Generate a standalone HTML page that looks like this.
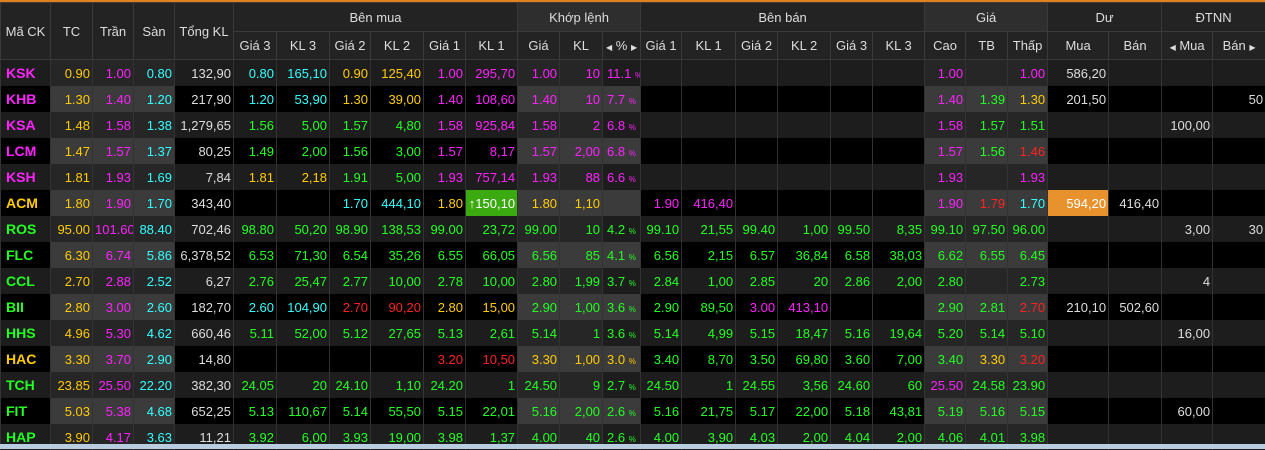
<!DOCTYPE html>
<html><head><meta charset="utf-8"><style>
body{margin:0;background:#000;width:1265px;height:449px;overflow:hidden;font-family:"Liberation Sans",sans-serif;font-size:13px}
.top{height:2px;background:#e0801e}
table{border-collapse:collapse;table-layout:fixed;width:1265px}
td,th{padding:0 2px;white-space:nowrap;overflow:hidden;text-align:right;border-left:1px solid #333;border-right:1px solid #333}
th{background:#232323;color:#ddd;font-weight:normal;text-align:center;border:1px solid #3a3a3a}
th.k{background:#2e2e2e}
tr.h1 th{height:28px}
tr.h2 th{height:27px}
tr.a td{background:#1d1d1d;height:26px}
tr.b td{background:#000;height:26px}
tr.a td.h{background:#262626}
tr.b td.h{background:#3b3b3b}
td.t{text-align:left;font-weight:bold;font-size:14px;padding-left:5px}
.c{color:#3ff}.y{color:#fc0}.m{color:#f2f}.g{color:#2f2}.r{color:#f22}.w{color:#ddd}
td.p{text-align:left;padding-left:4px}
small{font-size:8px}
td.gb{background:#3aaa10 !important;color:#fff}
td.ob{background:#e8922e !important;color:#fff}
.bar{position:absolute;left:0;top:444px;width:1265px;height:5px;background:#b8cde0}
</style></head><body>
<div class="top"></div>
<table>
<colgroup><col style="width:50px"><col style="width:42px"><col style="width:41px"><col style="width:41px"><col style="width:59px"><col style="width:43px"><col style="width:53px"><col style="width:41px"><col style="width:53px"><col style="width:42px"><col style="width:52px"><col style="width:42px"><col style="width:43px"><col style="width:38px"><col style="width:41px"><col style="width:54px"><col style="width:42px"><col style="width:53px"><col style="width:42px"><col style="width:52px"><col style="width:41px"><col style="width:42px"><col style="width:40px"><col style="width:61px"><col style="width:53px"><col style="width:51px"><col style="width:53px"></colgroup>
<tr class="h1"><th rowspan="2">Mã CK</th><th rowspan="2">TC</th><th rowspan="2">Trần</th><th rowspan="2">Sàn</th><th rowspan="2">Tổng KL</th><th colspan="6">Bên mua</th><th colspan="3" class="k">Khớp lệnh</th><th colspan="6">Bên bán</th><th colspan="3" class="k">Giá</th><th colspan="2">Dư</th><th colspan="2">ĐTNN</th></tr>
<tr class="h2"><th>Giá 3</th><th>KL 3</th><th>Giá 2</th><th>KL 2</th><th>Giá 1</th><th>KL 1</th><th>Giá</th><th>KL</th><th><small>◀</small> % <small>▶</small></th><th>Giá 1</th><th>KL 1</th><th>Giá 2</th><th>KL 2</th><th>Giá 3</th><th>KL 3</th><th>Cao</th><th>TB</th><th>Thấp</th><th>Mua</th><th>Bán</th><th><small>◀</small> Mua</th><th>Bán <small>▶</small></th></tr>

<tr class="a"><td class="t m">KSK</td><td class="h y">0.90</td><td class="h m">1.00</td><td class="h c">0.80</td><td class="w">132,90</td><td class="c">0.80</td><td class="c">165,10</td><td class="y">0.90</td><td class="y">125,40</td><td class="m">1.00</td><td class="m">295,70</td><td class="h m">1.00</td><td class="h m">10</td><td class="p m">11.1 <small>%</small></td><td></td><td></td><td></td><td></td><td></td><td></td><td class="h m">1.00</td><td class="h"></td><td class="h m">1.00</td><td class="w">586,20</td><td></td><td></td><td></td></tr>
<tr class="b"><td class="t m">KHB</td><td class="h y">1.30</td><td class="h m">1.40</td><td class="h c">1.20</td><td class="w">217,90</td><td class="c">1.20</td><td class="c">53,90</td><td class="y">1.30</td><td class="y">39,00</td><td class="m">1.40</td><td class="m">108,60</td><td class="h m">1.40</td><td class="h m">10</td><td class="p m h">7.7 <small>%</small></td><td></td><td></td><td></td><td></td><td></td><td></td><td class="h m">1.40</td><td class="h g">1.39</td><td class="h y">1.30</td><td class="w">201,50</td><td></td><td></td><td class="w">50</td></tr>
<tr class="a"><td class="t m">KSA</td><td class="h y">1.48</td><td class="h m">1.58</td><td class="h c">1.38</td><td class="w">1,279,65</td><td class="g">1.56</td><td class="g">5,00</td><td class="g">1.57</td><td class="g">4,80</td><td class="m">1.58</td><td class="m">925,84</td><td class="h m">1.58</td><td class="h m">2</td><td class="p m">6.8 <small>%</small></td><td></td><td></td><td></td><td></td><td></td><td></td><td class="h m">1.58</td><td class="h g">1.57</td><td class="h g">1.51</td><td></td><td></td><td class="w">100,00</td><td></td></tr>
<tr class="b"><td class="t m">LCM</td><td class="h y">1.47</td><td class="h m">1.57</td><td class="h c">1.37</td><td class="w">80,25</td><td class="g">1.49</td><td class="g">2,00</td><td class="g">1.56</td><td class="g">3,00</td><td class="m">1.57</td><td class="m">8,17</td><td class="h m">1.57</td><td class="h m">2,00</td><td class="p m h">6.8 <small>%</small></td><td></td><td></td><td></td><td></td><td></td><td></td><td class="h m">1.57</td><td class="h g">1.56</td><td class="h r">1.46</td><td></td><td></td><td></td><td></td></tr>
<tr class="a"><td class="t m">KSH</td><td class="h y">1.81</td><td class="h m">1.93</td><td class="h c">1.69</td><td class="w">7,84</td><td class="y">1.81</td><td class="y">2,18</td><td class="g">1.91</td><td class="g">5,00</td><td class="m">1.93</td><td class="m">757,14</td><td class="h m">1.93</td><td class="h m">88</td><td class="p m">6.6 <small>%</small></td><td></td><td></td><td></td><td></td><td></td><td></td><td class="h m">1.93</td><td class="h"></td><td class="h m">1.93</td><td></td><td></td><td></td><td></td></tr>
<tr class="b"><td class="t y">ACM</td><td class="h y">1.80</td><td class="h m">1.90</td><td class="h c">1.70</td><td class="w">343,40</td><td></td><td></td><td class="c">1.70</td><td class="c">444,10</td><td class="y">1.80</td><td class="gb">↑150,10</td><td class="h y">1.80</td><td class="h y">1,10</td><td class="h"></td><td class="m">1.90</td><td class="m">416,40</td><td></td><td></td><td></td><td></td><td class="h m">1.90</td><td class="h r">1.79</td><td class="h c">1.70</td><td class="ob">594,20</td><td class="w">416,40</td><td></td><td></td></tr>
<tr class="a"><td class="t g">ROS</td><td class="h y">95.00</td><td class="h m">101.60</td><td class="h c">88.40</td><td class="w">702,46</td><td class="g">98.80</td><td class="g">50,20</td><td class="g">98.90</td><td class="g">138,53</td><td class="g">99.00</td><td class="g">23,72</td><td class="h g">99.00</td><td class="h g">10</td><td class="p g">4.2 <small>%</small></td><td class="g">99.10</td><td class="g">21,55</td><td class="g">99.40</td><td class="g">1,00</td><td class="g">99.50</td><td class="g">8,35</td><td class="h g">99.10</td><td class="h g">97.50</td><td class="h g">96.00</td><td></td><td></td><td class="w">3,00</td><td class="w">30</td></tr>
<tr class="b"><td class="t g">FLC</td><td class="h y">6.30</td><td class="h m">6.74</td><td class="h c">5.86</td><td class="w">6,378,52</td><td class="g">6.53</td><td class="g">71,30</td><td class="g">6.54</td><td class="g">35,26</td><td class="g">6.55</td><td class="g">66,05</td><td class="h g">6.56</td><td class="h g">85</td><td class="p g h">4.1 <small>%</small></td><td class="g">6.56</td><td class="g">2,15</td><td class="g">6.57</td><td class="g">36,84</td><td class="g">6.58</td><td class="g">38,03</td><td class="h g">6.62</td><td class="h g">6.55</td><td class="h g">6.45</td><td></td><td></td><td></td><td></td></tr>
<tr class="a"><td class="t g">CCL</td><td class="h y">2.70</td><td class="h m">2.88</td><td class="h c">2.52</td><td class="w">6,27</td><td class="g">2.76</td><td class="g">25,47</td><td class="g">2.77</td><td class="g">10,00</td><td class="g">2.78</td><td class="g">10,00</td><td class="h g">2.80</td><td class="h g">1,99</td><td class="p g">3.7 <small>%</small></td><td class="g">2.84</td><td class="g">1,00</td><td class="g">2.85</td><td class="g">20</td><td class="g">2.86</td><td class="g">2,00</td><td class="h g">2.80</td><td class="h"></td><td class="h g">2.73</td><td></td><td></td><td class="w">4</td><td></td></tr>
<tr class="b"><td class="t g">BII</td><td class="h y">2.80</td><td class="h m">3.00</td><td class="h c">2.60</td><td class="w">182,70</td><td class="c">2.60</td><td class="c">104,90</td><td class="r">2.70</td><td class="r">90,20</td><td class="y">2.80</td><td class="y">15,00</td><td class="h g">2.90</td><td class="h g">1,00</td><td class="p g h">3.6 <small>%</small></td><td class="g">2.90</td><td class="g">89,50</td><td class="m">3.00</td><td class="m">413,10</td><td></td><td></td><td class="h g">2.90</td><td class="h g">2.81</td><td class="h r">2.70</td><td class="w">210,10</td><td class="w">502,60</td><td></td><td></td></tr>
<tr class="a"><td class="t g">HHS</td><td class="h y">4.96</td><td class="h m">5.30</td><td class="h c">4.62</td><td class="w">660,46</td><td class="g">5.11</td><td class="g">52,00</td><td class="g">5.12</td><td class="g">27,65</td><td class="g">5.13</td><td class="g">2,61</td><td class="h g">5.14</td><td class="h g">1</td><td class="p g">3.6 <small>%</small></td><td class="g">5.14</td><td class="g">4,99</td><td class="g">5.15</td><td class="g">18,47</td><td class="g">5.16</td><td class="g">19,64</td><td class="h g">5.20</td><td class="h g">5.14</td><td class="h g">5.10</td><td></td><td></td><td class="w">16,00</td><td></td></tr>
<tr class="b"><td class="t y">HAC</td><td class="h y">3.30</td><td class="h m">3.70</td><td class="h c">2.90</td><td class="w">14,80</td><td></td><td></td><td></td><td></td><td class="r">3.20</td><td class="r">10,50</td><td class="h y">3.30</td><td class="h y">1,00</td><td class="p y h">3.0 <small>%</small></td><td class="g">3.40</td><td class="g">8,70</td><td class="g">3.50</td><td class="g">69,80</td><td class="g">3.60</td><td class="g">7,00</td><td class="h g">3.40</td><td class="h y">3.30</td><td class="h r">3.20</td><td></td><td></td><td></td><td></td></tr>
<tr class="a"><td class="t g">TCH</td><td class="h y">23.85</td><td class="h m">25.50</td><td class="h c">22.20</td><td class="w">382,30</td><td class="g">24.05</td><td class="g">20</td><td class="g">24.10</td><td class="g">1,10</td><td class="g">24.20</td><td class="g">1</td><td class="h g">24.50</td><td class="h g">9</td><td class="p g">2.7 <small>%</small></td><td class="g">24.50</td><td class="g">1</td><td class="g">24.55</td><td class="g">3,56</td><td class="g">24.60</td><td class="g">60</td><td class="h m">25.50</td><td class="h g">24.58</td><td class="h g">23.90</td><td></td><td></td><td></td><td></td></tr>
<tr class="b"><td class="t g">FIT</td><td class="h y">5.03</td><td class="h m">5.38</td><td class="h c">4.68</td><td class="w">652,25</td><td class="g">5.13</td><td class="g">110,67</td><td class="g">5.14</td><td class="g">55,50</td><td class="g">5.15</td><td class="g">22,01</td><td class="h g">5.16</td><td class="h g">2,00</td><td class="p g h">2.6 <small>%</small></td><td class="g">5.16</td><td class="g">21,75</td><td class="g">5.17</td><td class="g">22,00</td><td class="g">5.18</td><td class="g">43,81</td><td class="h g">5.19</td><td class="h g">5.16</td><td class="h g">5.15</td><td></td><td></td><td class="w">60,00</td><td></td></tr>
<tr class="a"><td class="t g">HAP</td><td class="h y">3.90</td><td class="h m">4.17</td><td class="h c">3.63</td><td class="w">11,21</td><td class="g">3.92</td><td class="g">6,00</td><td class="g">3.93</td><td class="g">19,00</td><td class="g">3.98</td><td class="g">1,37</td><td class="h g">4.00</td><td class="h g">40</td><td class="p g">2.6 <small>%</small></td><td class="g">4.00</td><td class="g">3,90</td><td class="g">4.03</td><td class="g">2,00</td><td class="g">4.04</td><td class="g">2,00</td><td class="h g">4.06</td><td class="h g">4.01</td><td class="h g">3.98</td><td></td><td></td><td></td><td></td></tr>
</table>
<div class="bar"></div>
</body></html>
